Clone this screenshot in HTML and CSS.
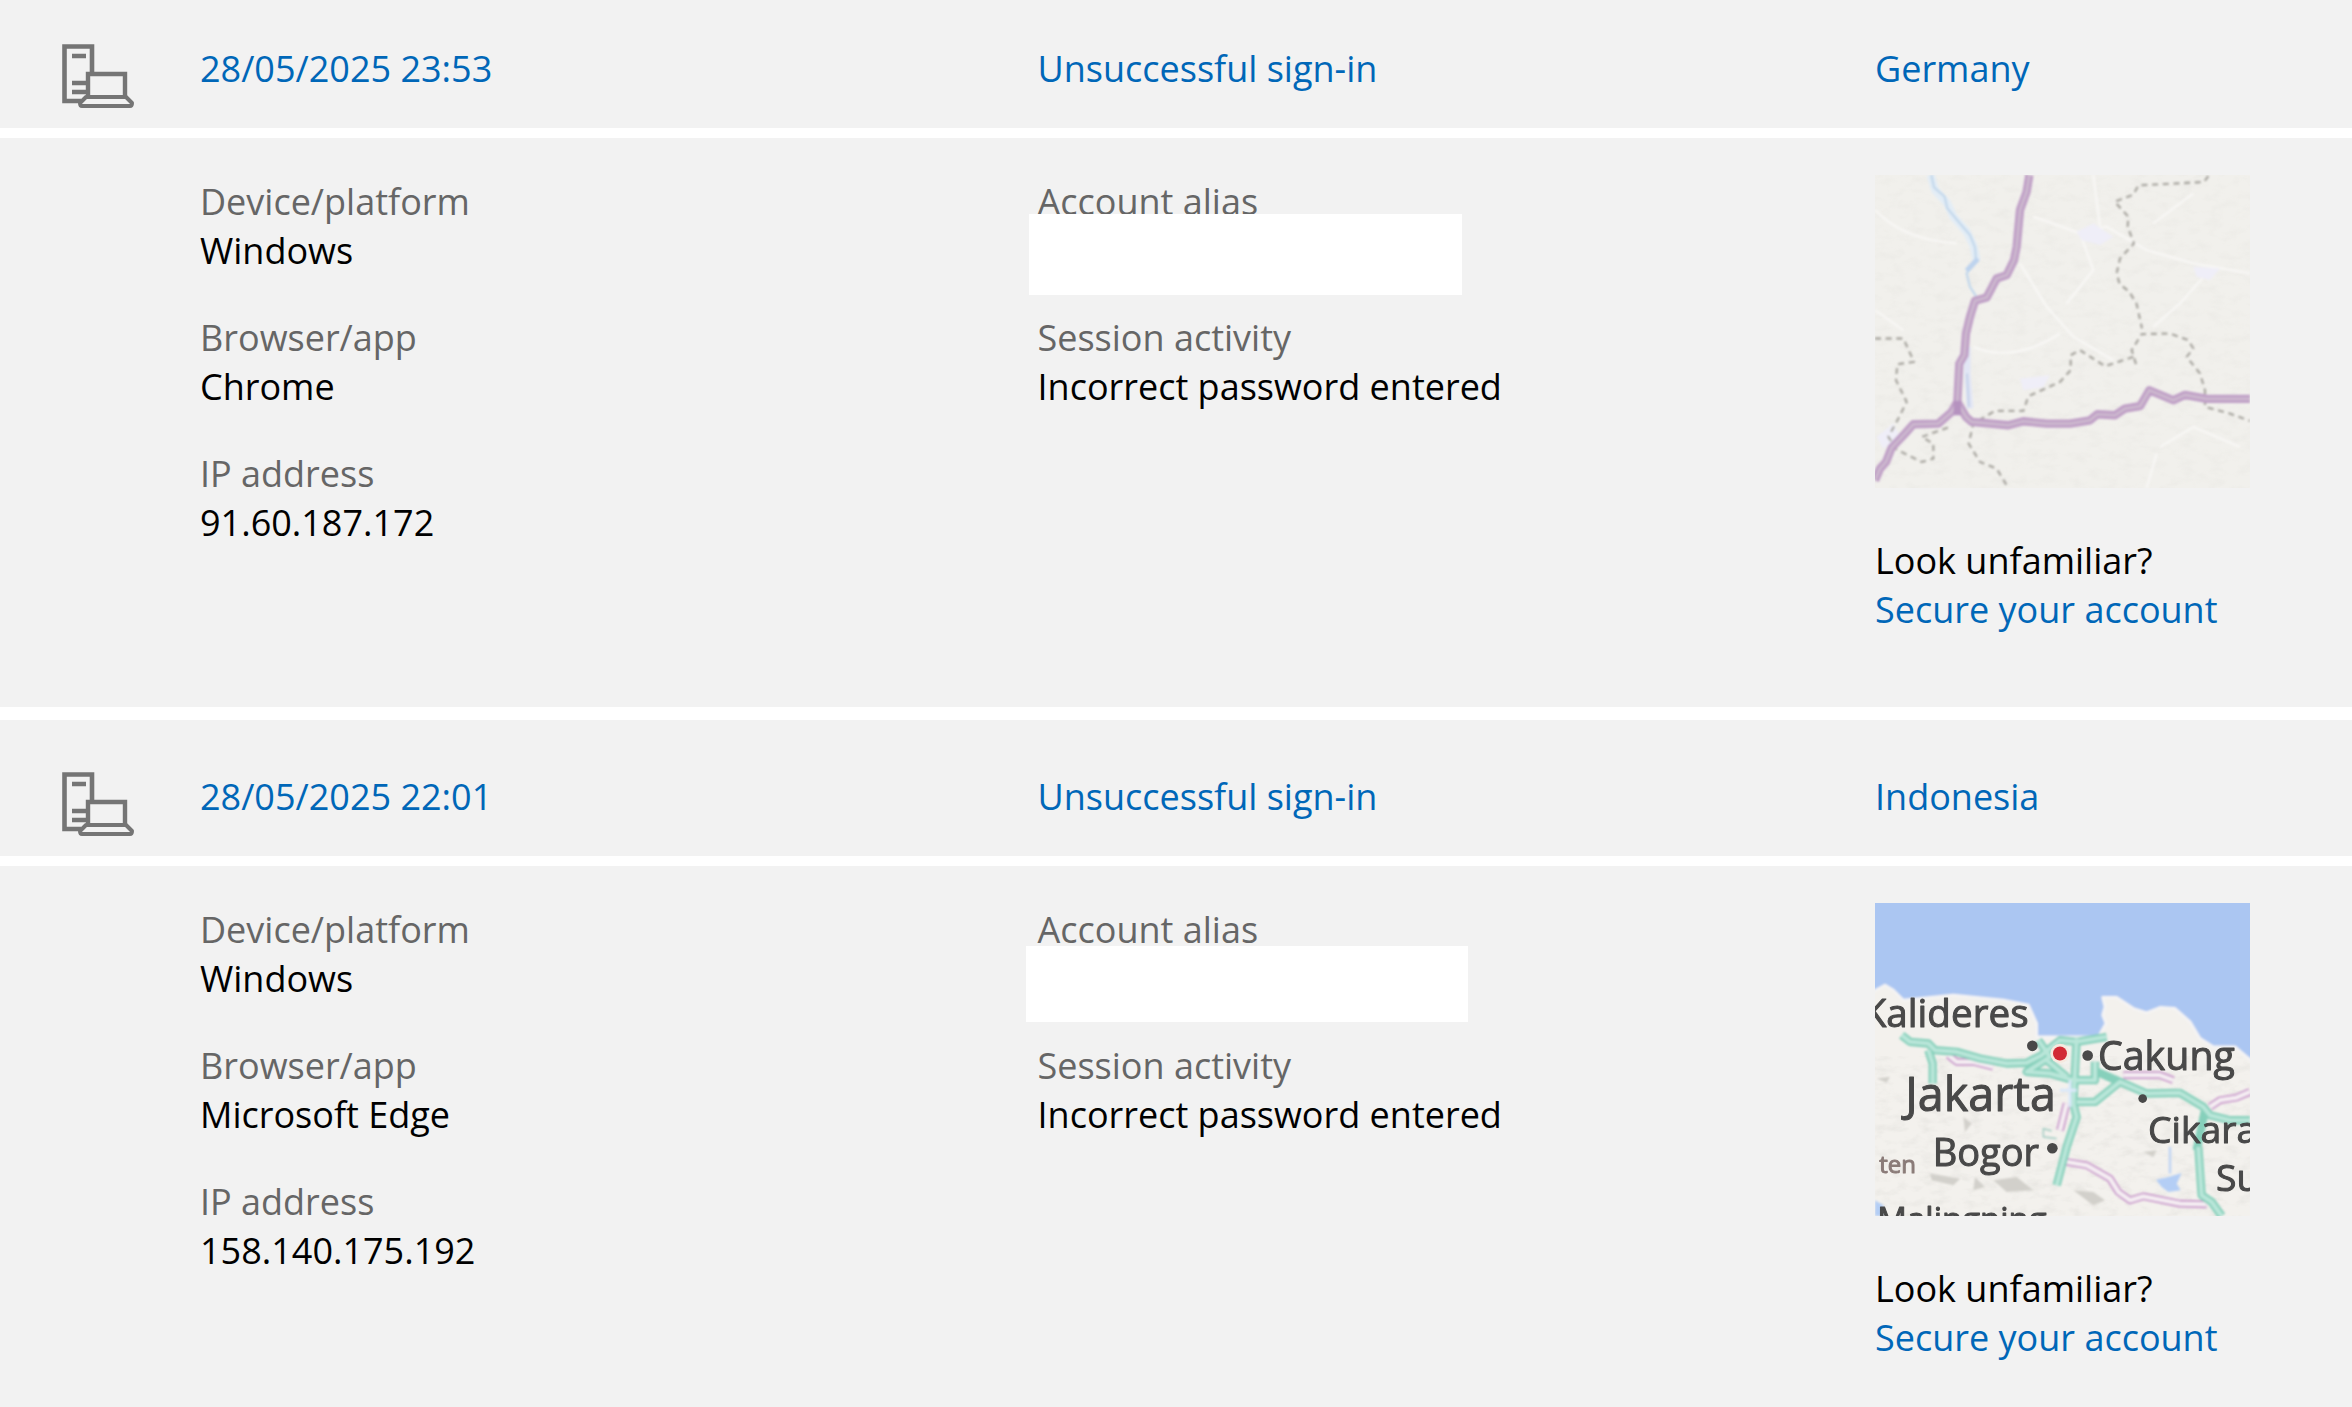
FILE: index.html
```html
<!DOCTYPE html>
<html lang="en-GB">
<head>
<meta charset="utf-8">
<meta name="viewport" content="width=device-width, initial-scale=1">
<title>Recent activity</title>
<link rel="stylesheet" href="styles.css">
</head>
<body>
<svg class="defs" aria-hidden="true">
  <defs>
    <symbol id="device" viewBox="0 0 72 64">
      <g fill="none" stroke="#757575" stroke-width="4.6">
        <path d="M30 28V2.500H2.500V57H19M10 12H24M10 39H24M10 48H24"/>
        <path d="M26 53V30H63V53" stroke-width="4.400"/>
        <path d="M24 53H64L70 59Q70 62 68 62H20Q18 62 18 59Z" stroke-width="4" stroke-linejoin="round"/>
      </g>
    </symbol>
    <filter id="soft" x="-10%" y="-10%" width="120%" height="120%"><feGaussianBlur stdDeviation="2.5"/></filter>
    <filter id="softText" x="-10%" y="-10%" width="120%" height="120%"><feGaussianBlur stdDeviation="1.3"/></filter>
    <filter id="relief" x="0" y="0" width="100%" height="100%">
      <feTurbulence type="fractalNoise" baseFrequency="0.022 0.04" numOctaves="3" seed="8"/>
      <feColorMatrix values="0 0 0 0 .72  0 0 0 0 .71  0 0 0 0 .68  1.6 0 0 0 -.72"/>
    </filter>
  </defs>
</svg>
<main class="activity">
  <article class="entry">
    <header class="summary">
      <svg class="device" role="img" aria-label="PC"><use href="#device"/></svg>
      <a href="#entry-1">28/05/2025 23:53</a>
      <a href="#entry-1">Unsuccessful sign-in</a>
      <a href="#entry-1">Germany</a>
    </header>
    <div class="details" id="entry-1">
      <dl class="facts facts-device">
        <div><dt>Device/platform</dt><dd>Windows</dd></div>
        <div><dt>Browser/app</dt><dd>Chrome</dd></div>
        <div><dt>IP address</dt><dd>91.60.187.172</dd></div>
      </dl>
      <dl class="facts">
        <div><dt>Account alias</dt><dd class="alias"><span class="mask"></span></dd></div>
        <div><dt>Session activity</dt><dd>Incorrect password entered</dd></div>
      </dl>
      <div class="place">
        <svg class="map" viewBox="45 45 1125 938" preserveAspectRatio="none" role="img" aria-label="Map of the sign-in location">
          <rect x="45" y="45" width="1125" height="938" fill="#f1f0ec"/>
          <rect x="45" y="45" width="1125" height="938" filter="url(#relief)" opacity=".3"/>
          <g filter="url(#soft)" fill="none" stroke-linejoin="round">
            <g stroke="#f8f7f5" stroke-width="7">
              <path d="M45 150Q130 240 290 250M480 310L560 440L640 530L760 600M45 450L130 510M340 560Q460 610 600 520M520 170L660 220L740 200L860 270L1000 310L1170 340M660 220L700 330L620 430M700 45L720 200M880 190L1000 100M1040 340L960 430L880 500M900 860L1000 800L1140 860M860 983L890 880"/>
            </g>
            <g fill="#efeef8"><path d="M650 215L700 190L760 230L720 255L665 240ZM1000 320L1080 325L1050 360L1010 350ZM50 830L100 790L120 830L70 865ZM480 655L570 645L550 680L490 690Z"/></g>
            <path d="M212 45L225 90L262 130L280 170L320 215L340 255L350 300" stroke="#e3edf6" stroke-width="24"/>
            <path d="M214 45L222 82L254 110L262 145L300 190L330 225L345 262L348 300L320 340L330 380L348 408" stroke="#c3d8ec" stroke-width="7"/>
            <path d="M320 332L354 296" stroke="#bdd3ee" stroke-width="15"/>
            <path d="M322 560V640L330 745" stroke="#e2e6f5" stroke-width="20"/>
            <path d="M321 640L327 740" stroke="#c3d0e8" stroke-width="6"/>
            <g stroke="#aaa8a2" stroke-width="7" stroke-dasharray="18 14">
              <path d="M1045 48L1032 66L835 76L820 104L764 125L805 170L803 200L822 250L780 295L770 340L779 372L808 395L830 432L846 505"/>
              <path d="M828 612L815 570L845 522L930 520L985 540L1000 565L980 590L1020 640L1035 690V740L1110 760L1170 782"/>
              <path d="M820 590L735 618L660 570L632 585L632 630L600 665L505 708L490 752L405 752L340 790L326 850L360 905L410 925L445 983"/>
              <path d="M45 535L130 535L162 605L112 612L108 660L140 725L115 775L85 830L110 868L185 905L220 895L220 850L185 830L275 798"/>
            </g>
            <g stroke="#bf9fc6" stroke-width="25">
              <path d="M508 45L500 95L480 150L470 260L462 300L440 345L410 355L380 412L345 422L330 470L318 520L313 585L298 610L292 725L275 755L235 790L160 792L135 820L95 862L78 905L60 925L45 960"/>
              <path d="M292 725L318 770L335 785L445 795L490 783L560 790L630 790L690 780L712 762L765 765L795 745L840 738L868 690L940 720L975 704L1040 716L1170 716"/>
            </g>
            <g stroke="#cdb9cf" stroke-width="8">
              <path d="M508 45L500 95L480 150L470 260L462 300L440 345L410 355L380 412L345 422L330 470L318 520L313 585L298 610L292 725L275 755L235 790L160 792L135 820L95 862L78 905L60 925L45 960"/>
              <path d="M292 725L318 770L335 785L445 795L490 783L560 790L630 790L690 780L712 762L765 765L795 745L840 738L868 690L940 720L975 704L1040 716L1170 716"/>
            </g>
            <path d="M292 722V765" stroke="#b592bf" stroke-width="22"/>
          </g>
        </svg>
        <p>Look unfamiliar?</p>
        <a href="#secure">Secure your account</a>
      </div>
    </div>
  </article>

  <article class="entry">
    <header class="summary">
      <svg class="device" role="img" aria-label="PC"><use href="#device"/></svg>
      <a href="#entry-2">28/05/2025 22:01</a>
      <a href="#entry-2">Unsuccessful sign-in</a>
      <a href="#entry-2">Indonesia</a>
    </header>
    <div class="details" id="entry-2">
      <dl class="facts facts-device">
        <div><dt>Device/platform</dt><dd>Windows</dd></div>
        <div><dt>Browser/app</dt><dd>Microsoft Edge</dd></div>
        <div><dt>IP address</dt><dd>158.140.175.192</dd></div>
      </dl>
      <dl class="facts">
        <div><dt>Account alias</dt><dd class="alias"><span class="mask mask-wide"></span></dd></div>
        <div><dt>Session activity</dt><dd>Incorrect password entered</dd></div>
      </dl>
      <div class="place">
        <svg class="map" viewBox="45 39 1125 938" preserveAspectRatio="none" role="img" aria-label="Map of Jakarta">
          <rect x="45" y="39" width="1125" height="938" fill="#f3f1ed"/>
          <rect x="45" y="500" width="1125" height="477" filter="url(#relief)" opacity=".6"/>
          <g filter="url(#soft)" fill="none" stroke-linejoin="round">
            <path d="M30 20H1190V522L1160 500L1125 470H1060L1020 445L990 395L945 355L900 352L860 368L820 355L770 322L728 322L735 350L728 375L738 400L715 440H530V400L505 345L430 330L280 315L130 330L100 300L75 285L30 310Z" fill="#abc6f2" stroke="#f5f4f4" stroke-width="8"/>
            <g fill="#d2d0cb"><path d="M50 565L90 560L80 578ZM310 680L335 700L315 725ZM345 860L375 890L340 900ZM640 900L700 905L735 930L700 945ZM850 785L890 780L880 800ZM210 850L300 865L280 885L215 870ZM400 870L470 860L520 900L440 905Z"/></g>
            <path d="M888 868L925 860L965 848L950 880L962 900L925 905L905 890ZM45 930L70 945V977H45Z" fill="#b4cef5"/>
            <path d="M930 770V850" stroke="#c3d6f3" stroke-width="8"/>
            <path d="M265 495L290 515L340 515L400 530M790 555H900L940 570M1050 650L1080 630L1130 622L1170 605M620 640L600 720M620 815L680 825L750 865L775 905L810 930L850 918L960 940L1040 942" stroke="#c894ca" stroke-width="23"/>
            <path d="M265 495L290 515L340 515L400 530M790 555H900L940 570M1050 650L1080 630L1130 622L1170 605M620 640L600 720M620 815L680 825L750 865L775 905L810 930L850 918L960 940L1040 942" stroke="#f5eef3" stroke-width="13"/>
            <path d="M590 745L550 740V715L575 722" stroke="#a9cfc6" stroke-width="5"/>
            <g stroke="#86d0bb" stroke-width="25">
              <path d="M125 435L150 455L205 460L225 480L290 485L360 505L440 520L500 518L545 495L600 450L650 455L740 440M205 480L218 520V580M535 450L570 500L500 545L570 550L640 570H705V515M560 510L620 560M650 445L640 640L650 680L620 770L590 885M650 635H705L780 575L860 610L960 608L1030 650L1050 675L1110 690H1170M780 575L700 540M1015 770L1025 915L1055 935L1085 977M1035 660L1010 780"/>
            </g>
            <g stroke="#b9e6d9" stroke-width="12">
              <path d="M125 435L150 455L205 460L225 480L290 485L360 505L440 520L500 518L545 495L600 450L650 455L740 440M205 480L218 520V580M535 450L570 500L500 545L570 550L640 570H705V515M560 510L620 560M650 445L640 640L650 680L620 770L590 885M650 635H705L780 575L860 610L960 608L1030 650L1050 675L1110 690H1170M1015 770L1025 915L1055 935L1085 977"/>
            </g>
            <g stroke="#dbe9fa" stroke-width="9"><path d="M600 600H650M630 570V650"/></g>
          </g>
          <g filter="url(#softText)">
            <g fill="#484848"><circle cx="517" cy="467" r="16"/><circle cx="683" cy="496" r="16"/><circle cx="848" cy="625" r="13"/><circle cx="577" cy="774" r="16"/></g>
            <circle cx="600" cy="490" r="29" fill="#f6e9df"/><circle cx="600" cy="490" r="21" fill="#d22a35"/>
            <g class="map-labels">
              <text x="8" y="412" font-size="116">Kalideres</text>
              <text x="714" y="540" font-size="118">Cakung</text>
              <text x="136" y="661" font-size="140">Jakarta</text>
              <text x="864" y="758" font-size="112">Cikarang</text>
              <text x="218" y="826" font-size="114">Bogor</text>
              <text x="1068" y="902" font-size="112">Subang</text>
              <text x="52" y="1022" font-size="99">Malingping</text>
              <text class="region" x="58" y="849" font-size="72">ten</text>
            </g>
          </g>
        </svg>
        <p>Look unfamiliar?</p>
        <a href="#secure">Secure your account</a>
      </div>
    </div>
  </article>
</main>
</body>
</html>
```
FILE: styles.css
```css
* {
  box-sizing: border-box;
}

body {
  margin: 0;
  background: #fff;
  color: #000;
  font-family: "Open Sans", "Noto Sans", sans-serif;
  font-size: 36px;
  line-height: 49px;
}

a {
  color: #0067b8;
  text-decoration: none;
}

a:hover {
  text-decoration: underline;
}

p,
dl,
dd {
  margin: 0;
}

.defs {
  position: absolute;
  width: 0;
  height: 0;
}

.activity {
  display: flex;
  flex-direction: column;
  gap: 13px;
  min-height: 100vh;
}

.entry {
  display: flex;
  flex-direction: column;
  gap: 10px;
}

.entry:last-child {
  flex-grow: 1;
}

.summary,
.details {
  display: grid;
  grid-template-columns: 200px 1fr 1fr 477px;
  background: #f2f2f2;
}

.summary {
  align-items: start;
  padding: 52px 0 35px;
}

.entry:first-child .summary {
  padding-top: 44px;
}

.device {
  width: 72px;
  height: 64px;
  margin: 0 0 -15px 62px;
}

.details {
  padding: 37px 0 73px;
}

.entry:last-child .details {
  flex-grow: 1;
  padding-bottom: 32px;
}

.facts {
  display: flex;
  flex-direction: column;
  gap: 38px;
  padding-top: 2px;
}

.facts-device {
  grid-column: 2;
}

dt {
  color: #666;
}

.alias {
  position: relative;
  height: 49px;
}

.mask {
  position: absolute;
  top: -12px;
  left: -9px;
  width: 433px;
  height: 81px;
  background: #fff;
}

.mask-wide {
  top: -8px;
  left: -12px;
  width: 442px;
  height: 76px;
}

.place {
  display: flex;
  flex-direction: column;
  align-items: flex-start;
}

.map {
  display: block;
  width: 375px;
  height: 313px;
  margin-bottom: 48px;
}

.map-labels {
  fill: #484848;
  stroke: #484848;
  stroke-width: 3px;
  stroke-linejoin: round;
}

.map-labels .region {
  fill: #8a7b78;
  stroke: #8a7b78;
}
```
